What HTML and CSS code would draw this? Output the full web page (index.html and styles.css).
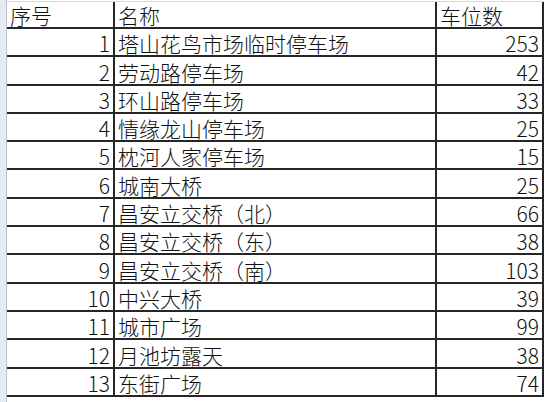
FILE: index.html
```html
<!DOCTYPE html>
<html lang="zh-CN">
<head>
<meta charset="utf-8">
<title>停车场车位</title>
<link rel="stylesheet" href="styles.css">
</head>
<body>
<div class="page">
  <div class="gutter"></div>
  <div class="sheet">
    <div class="row head">
      <div class="c c1 l">序号</div>
      <div class="c c2">名称</div>
      <div class="c c3 l">车位数</div>
    </div>
    <div class="row"><div class="c c1">1</div><div class="c c2">塔山花鸟市场临时停车场</div><div class="c c3">253</div></div>
    <div class="row"><div class="c c1">2</div><div class="c c2">劳动路停车场</div><div class="c c3">42</div></div>
    <div class="row"><div class="c c1">3</div><div class="c c2">环山路停车场</div><div class="c c3">33</div></div>
    <div class="row"><div class="c c1">4</div><div class="c c2">情缘龙山停车场</div><div class="c c3">25</div></div>
    <div class="row"><div class="c c1">5</div><div class="c c2">枕河人家停车场</div><div class="c c3">15</div></div>
    <div class="row"><div class="c c1">6</div><div class="c c2">城南大桥</div><div class="c c3">25</div></div>
    <div class="row"><div class="c c1">7</div><div class="c c2">昌安立交桥（北）</div><div class="c c3">66</div></div>
    <div class="row"><div class="c c1">8</div><div class="c c2">昌安立交桥（东）</div><div class="c c3">38</div></div>
    <div class="row"><div class="c c1">9</div><div class="c c2">昌安立交桥（南）</div><div class="c c3">103</div></div>
    <div class="row"><div class="c c1">10</div><div class="c c2">中兴大桥</div><div class="c c3">39</div></div>
    <div class="row"><div class="c c1">11</div><div class="c c2">城市广场</div><div class="c c3">99</div></div>
    <div class="row"><div class="c c1">12</div><div class="c c2">月池坊露天</div><div class="c c3">38</div></div>
    <div class="row"><div class="c c1">13</div><div class="c c2">东街广场</div><div class="c c3">74</div></div>
  </div>
</div>
</body>
</html>
```
FILE: styles.css
```css
html, body {
  margin: 0;
  padding: 0;
  background: #ffffff;
}
body {
  width: 550px;
  height: 402px;
  overflow: hidden;
  font-family: "Noto Sans CJK SC", "Noto Sans", sans-serif;
  color: #111;
}
.page {
  display: flex;
  height: 402px;
}
.gutter {
  width: 6px;
  flex: none;
  background: #e6eaf1;
  border-right: 1px solid #b9c2d2;
}
.sheet {
  display: flex;
  flex-direction: column;
  border-top: 1px solid #d5dae3;
  margin-top: 1px;
}
.row {
  display: grid;
  grid-template-columns: 108px 322px 107px;
  height: 28.3px;
  box-sizing: border-box;
  border-bottom: 2px solid #262626;
}
.row.head {
  height: 27px;
}
.c {
  box-sizing: border-box;
  border-right: 2px solid #262626;
  display: flex;
  align-items: flex-end;
  font-size: 21px;
  font-weight: 300;
  line-height: 24px;
  padding-bottom: 0;
  white-space: nowrap;
}
.c1, .c3 {
  justify-content: flex-end;
  padding-right: 3px;
}
.c2 {
  padding-left: 3px;
}
.c.l {
  justify-content: flex-start;
  padding-left: 3px;
  padding-right: 0;
}
```
